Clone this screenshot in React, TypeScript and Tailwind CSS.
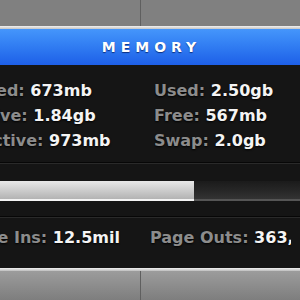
const stats = [
  ["Wired:", "673mb", "Used:", "2.50gb"],
  ["Active:", "1.84gb", "Free:", "567mb"],
  ["Inactive:", "973mb", "Swap:", "2.0gb"],
];

const Stat = ({ label, value }: { label: string; value: string }) => (
  <div className="whitespace-nowrap overflow-hidden">
    <span className="text-[#8c8c8c]">{label}</span>{" "}
    <span className="text-[#f4f4f4]">{value}</span>
  </div>
);

const Backdrop = ({ bottom }: { bottom?: boolean }) => (
  <div className={`flex ${bottom ? "flex-1" : "h-[26px]"}`}>
    <div
      className={`w-[141px] border-r border-[#5f5f5f] ${
        bottom ? "bg-gradient-to-b from-[#9c9c9c] to-[#7e7e7e]" : "bg-[#808080]"
      }`}
    />
    <div
      className={`flex-1 ${
        bottom ? "bg-gradient-to-b from-[#9c9c9c] to-[#7e7e7e]" : "bg-[#808080]"
      }`}
    />
  </div>
);

export default function App() {
  return (
    <div className="w-[300px] h-[300px] overflow-hidden flex flex-col font-['DejaVu_Sans',sans-serif] font-bold bg-[#808080]">
      <Backdrop />

      {/* panel */}
      <div className="h-[3px] bg-gradient-to-b from-[#f2f2f2] to-[#c4c4c4]" />
      <div className="h-[36px] flex items-center justify-center bg-gradient-to-b from-[#4596fb] to-[#1e5fe8]">
        <span className="text-[14px] leading-none tracking-[5px] pl-[3px] text-white [text-shadow:0_1px_1px_rgba(0,20,80,0.7)]">
          MEMORY
        </span>
      </div>

      <div className="h-[203px] bg-[#151515] overflow-hidden text-[16px] [text-shadow:0_1px_2px_#000]">
        <div className="pt-[13px] ml-[-35px] grid grid-cols-[189px_189px] leading-[25px]">
          {stats.map(([l1, v1, l2, v2]) => (
            <div key={l1} className="contents">
              <Stat label={l1} value={v1} />
              <Stat label={l2} value={v2} />
            </div>
          ))}
        </div>

        <div className="mt-[9px] h-px bg-[#070707]" />
        <div className="h-px bg-[#2a2a2a]" />

        <div className="mt-[17px] h-[20px] flex flex-col bg-[#181818]">
          <div className="flex-1 flex">
            <div className="w-[194px] bg-gradient-to-b from-[#e8e8e8] to-[#b3b3b3]" />
            <div className="flex-1 bg-gradient-to-b from-[#1b1b1b] via-[#262626] to-[#333333]" />
          </div>
          <div className="h-[2px] flex">
            <div className="w-[194px] bg-[#f3f3f3]" />
            <div className="flex-1 bg-[#555555]" />
          </div>
        </div>

        <div className="mt-[15px] h-px bg-[#070707]" />
        <div className="h-px bg-[#2a2a2a]" />

        <div className="pt-[7px] ml-[-36px] grid grid-cols-[186px_141px] leading-[25px]">
          <Stat label="Page Ins:" value="12.5mil" />
          <Stat label="Page Outs:" value="363,412" />
        </div>
      </div>
      <div className="h-[3px] bg-gradient-to-b from-[#f0f0f0] to-[#bdbdbd]" />

      <Backdrop bottom />
    </div>
  );
}
